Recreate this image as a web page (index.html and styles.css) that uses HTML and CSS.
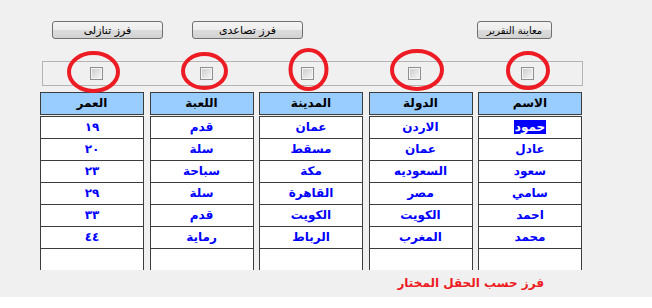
FILE: index.html
```html
<!DOCTYPE html>
<html lang="ar">
<head>
  <meta charset="UTF-8">
  <title>فرز</title>
  <link rel="stylesheet" href="styles.css">
</head>
<body>
  <div class="form">
    <div class="toolbar">
      <button class="btn btn-desc">فرز تنازلى</button>
      <button class="btn btn-asc">فرز تصاعدى</button>
      <button class="btn btn-report">معاينة التقرير</button>
    </div>

    <div class="picker">
      <span class="check"></span>
      <span class="check"></span>
      <span class="check"></span>
      <span class="check"></span>
      <span class="check"></span>
    </div>

    <div class="grid">
      <div class="col">
        <div class="head">الاسم</div>
        <div class="cell"><span class="sel">حمود</span></div>
        <div class="cell">عادل</div>
        <div class="cell">سعود</div>
        <div class="cell">سامي</div>
        <div class="cell">احمد</div>
        <div class="cell">محمد</div>
        <div class="cell"></div>
      </div>
      <div class="col">
        <div class="head">الدولة</div>
        <div class="cell">الاردن</div>
        <div class="cell">عمان</div>
        <div class="cell">السعوديه</div>
        <div class="cell">مصر</div>
        <div class="cell">الكويت</div>
        <div class="cell">المغرب</div>
        <div class="cell"></div>
      </div>
      <div class="col">
        <div class="head">المدينة</div>
        <div class="cell">عمان</div>
        <div class="cell">مسقط</div>
        <div class="cell">مكة</div>
        <div class="cell">القاهرة</div>
        <div class="cell">الكويت</div>
        <div class="cell">الرباط</div>
        <div class="cell"></div>
      </div>
      <div class="col">
        <div class="head">اللعبة</div>
        <div class="cell">قدم</div>
        <div class="cell">سلة</div>
        <div class="cell">سباحة</div>
        <div class="cell">سلة</div>
        <div class="cell">قدم</div>
        <div class="cell">رماية</div>
        <div class="cell"></div>
      </div>
      <div class="col">
        <div class="head">العمر</div>
        <div class="cell">١٩</div>
        <div class="cell">٢٠</div>
        <div class="cell">٢٣</div>
        <div class="cell">٢٩</div>
        <div class="cell">٣٣</div>
        <div class="cell">٤٤</div>
        <div class="cell"></div>
      </div>
    </div>

    <div class="status">فرز حسب الحقل المختار</div>

    <!-- red marks drawn over the check boxes -->
    <svg class="marks" width="652" height="297" viewBox="0 0 652 297">
      <g fill="none" stroke="#ed1c24" stroke-width="4">
        <ellipse cx="93.5" cy="72" rx="24.5" ry="19"/>
        <ellipse cx="204.5" cy="71" rx="21.5" ry="17"/>
        <ellipse cx="308.5" cy="69.5" rx="18" ry="19.5"/>
        <ellipse cx="417" cy="70" rx="25" ry="19"/>
        <ellipse cx="528" cy="70.5" rx="20" ry="17.5"/>
      </g>
    </svg>
  </div>
</body>
</html>
```

FILE: styles.css
```css
body {
  margin: 0;
  background: #ffffff;
  font-family: "DejaVu Sans", sans-serif;
}
.form {
  position: relative;
  height: 297px;
  background: #f0f0f0;
  overflow: hidden;
}

/* top buttons */
.toolbar {
  display: flex;
  padding: 21px 100px 0 52px;
}
.btn {
  height: 18px;
  width: 111px;
  padding: 0;
  border: 1px solid #707070;
  border-radius: 3px;
  background: linear-gradient(to bottom, #f4f4f4 0%, #ececec 50%, #dcdcdc 51%, #d2d2d2 100%);
  font-family: "DejaVu Sans", sans-serif;
  font-size: 11px;
  color: #000;
  direction: rtl;
}
.btn-asc {
  margin-left: 29px;
}
.btn-report {
  width: 75px;
  margin-left: auto;
  font-size: 10px;
}

/* check box strip */
.picker {
  display: flex;
  box-sizing: border-box;
  width: 541px;
  height: 25px;
  margin: 22px 0 0 42px;
  padding-top: 5px;
  border: 1px solid #b4b4b4;
}
.check {
  box-sizing: border-box;
  width: 13px;
  height: 13px;
  border: 1px solid #8e8f8f;
  background: linear-gradient(135deg, #cbcbcb, #f6f6f6);
  box-shadow: inset 0 0 0 1px #f4f4f4;
}
.check:nth-child(1) { margin-left: 47px; }
.check:nth-child(2) { margin-left: 97px; }
.check:nth-child(3) { margin-left: 88px; }
.check:nth-child(4) { margin-left: 94px; }
.check:nth-child(5) { margin-left: 100px; }

/* data columns */
.grid {
  display: grid;
  grid-template-columns: repeat(5, 104px);
  column-gap: 5.5px;
  direction: rtl;
  width: 542px;
  height: 178px;
  margin: 6px 0 0 40px;
  overflow: hidden;
}
.col {
  display: flex;
  flex-direction: column;
}
.head {
  box-sizing: border-box;
  height: 23px;
  margin-bottom: 1px;
  border: 1px solid #3c3c3c;
  background: #99ccff;
  color: #000;
  font-size: 12px;
  font-weight: bold;
  line-height: 20px;
  text-align: center;
}
.cell {
  box-sizing: border-box;
  flex: none;
  height: 22px;
  border: 1px solid #3c3c3c;
  border-bottom: none;
  background: #ffffff;
  color: #0000ff;
  font-size: 12px;
  font-weight: bold;
  line-height: 20px;
  text-align: center;
}
.sel {
  background: #0000ff;
  color: #ffffff;
  padding: 0 1px;
}

.status {
  height: 27px;
  padding-right: 108px;
  direction: rtl;
  color: #ed1c24;
  font-size: 12px;
  font-weight: bold;
  line-height: 27px;
}

.marks {
  position: absolute;
  top: 0;
  left: 0;
  pointer-events: none;
}
```
